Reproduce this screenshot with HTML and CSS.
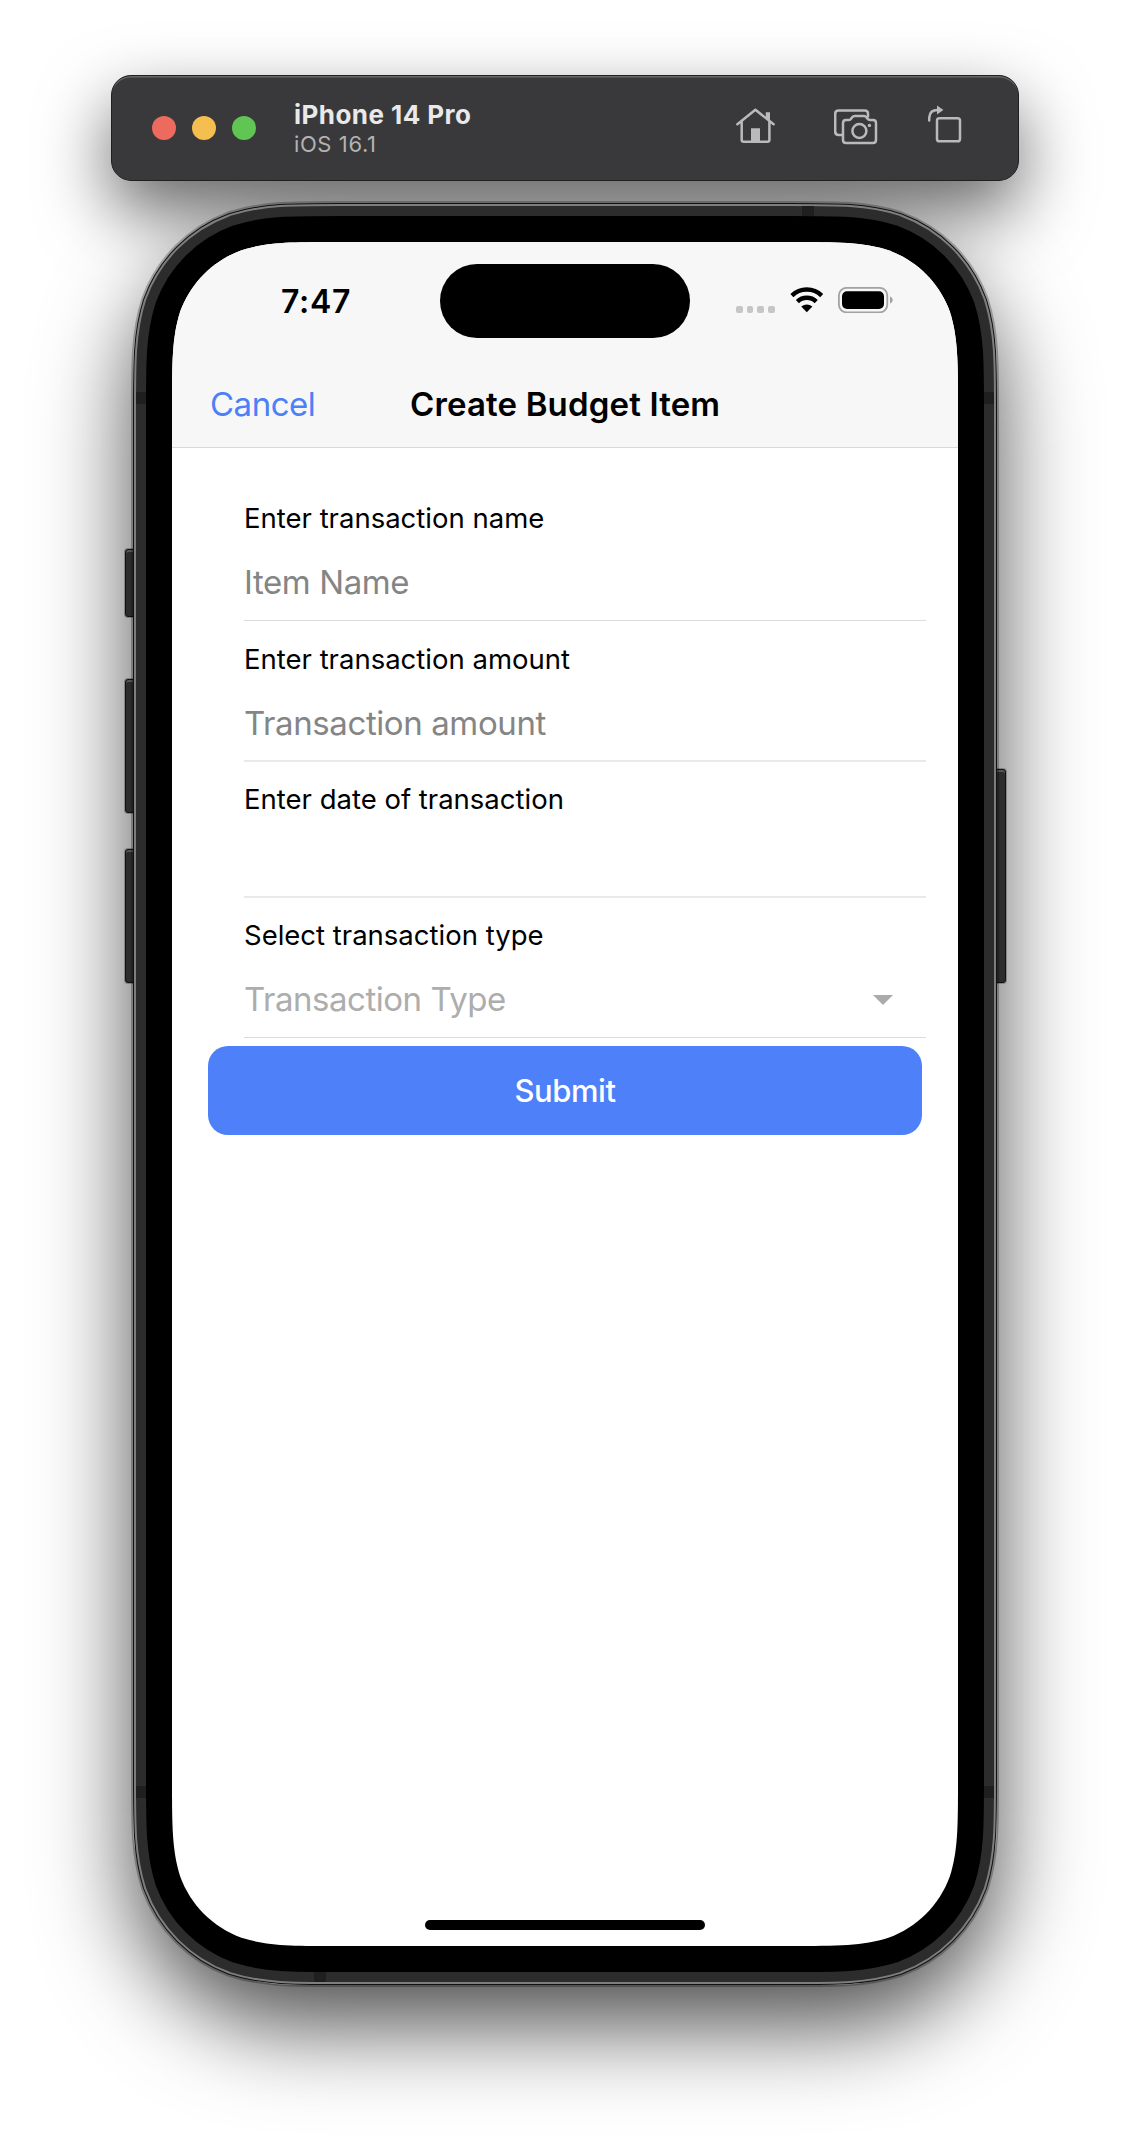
FILE: index.html
```
<!DOCTYPE html>
<html lang="en">
<head>
<meta charset="utf-8">
<title>Create Budget Item</title>
<link rel="stylesheet" href="styles.css">
</head>
<body>
<div class="dock">
<header class="toolbar">
  <div class="lights"><i class="light red"></i><i class="light yellow"></i><i class="light green"></i></div>
  <div class="device-name">
    <span class="name">iPhone 14 Pro</span>
    <span class="os">iOS 16.1</span>
  </div>
  <div class="tools">
    <svg class="tool-home" width="40" height="40" viewBox="0 -3 40 40">
      <path d="M1.4 16.2 19.4 1.8 37.6 16.2M5.7 13.5V31.8Q5.7 33.8 7.7 33.8H31.4Q33.4 33.8 33.4 31.8V13.5"/>
      <path class="solid" d="M29.8 4.2h4.2v10l-4.2-3.4zM15 20.2h9V34h-9z"/>
    </svg>
    <svg class="tool-camera" width="44" height="40" viewBox="0 -4 44 40">
      <path d="M8 26H4.6Q1.2 26 1.2 22.6V4.9Q1.2 1.5 4.6 1.5H30.8Q34 1.5 34 4.8V7.4"/>
      <path d="M12 34Q9 34 9 31V14Q9 11 12 11H15Q16.3 11 17 9.8L18 8.4Q19 7 20.8 7H30Q31.6 7 32.6 8.4L33.6 9.8Q34.4 11 36 11H39Q42 11 42 14V31Q42 34 39 34Z"/>
      <circle cx="25.4" cy="22" r="7"/>
      <circle class="solid" cx="35.4" cy="16.4" r="1.7"/>
    </svg>
    <svg class="tool-rotate" width="34" height="40" viewBox="0 -0.5 34 40">
      <rect x="9" y="12.8" width="23" height="23" rx="2.4"/>
      <path d="M1.2 15V13Q1.2 4.5 9.6 4.5"/>
      <path class="solid" d="M9 0 15.4 4.4 9 9z"/>
    </svg>
  </div>
</header>
</div>

<main class="device">
  <i class="key mute"></i><i class="key vol-up"></i><i class="key vol-down"></i><i class="key power"></i>
  <svg class="frame" width="864" height="1782" viewBox="-39 -39 864 1782">
    <defs>
      <path id="edge" d="M168.2 0H617.8C666.3 0 690.5 0 716.5 8.2C745 18.6 767.4 41 777.8 69.5C786 95.5 786 119.7 786 168.2V1535.8C786 1584.3 786 1608.5 777.8 1634.5C767.4 1663 745 1685.4 716.5 1695.8C690.5 1704 666.3 1704 617.8 1704H168.2C119.7 1704 95.5 1704 69.5 1695.8C41 1685.4 18.6 1663 8.2 1634.5C0 1608.5 0 1584.3 0 1535.8V168.2C0 119.7 0 95.5 8.2 69.5C18.6 41 41 18.6 69.5 8.2C95.5 0 119.7 0 168.2 0Z"/>
    </defs>
    <use href="#edge" class="ring halo"/>
    <use href="#edge" class="ring outline"/>
    <use href="#edge" class="ring chrome"/>
    <use href="#edge" class="ring band"/>
    <path class="antenna" d="M630-36h12v10h-12zM142 1730h12v10h-12zM-36 150h10v12h-10zM812 150h10v12h-10zM-36 1544h10v12h-10zM812 1544h10v12h-10z"/>
    <use href="#edge" class="ring bezel"/>
  </svg>
  <div class="screen">
    <div class="top">
      <div class="status">
        <span class="time">7:47</span>
        <span class="island"></span>
        <span class="indicators">
          <span class="signal"><i></i><i></i><i></i><i></i></span>
          <svg class="wifi" width="34" height="26" viewBox="0 0 34 26">
            <path class="arc" d="M1.9 8.6A21.3 21.3 0 0 1 31.7 8.6M7.4 14.6A13.4 13.4 0 0 1 26.2 14.6"/>
            <path d="M11.2 19.5Q16.8 15.6 22.4 19.5L16.8 25.2z"/>
          </svg>
          <svg class="battery" width="56" height="26" viewBox="0 0 56 26">
            <rect class="shell" x=".9" y=".9" width="48.4" height="24.4" rx="7.6"/>
            <rect x="4" y="4.2" width="42" height="17.8" rx="5"/>
            <path class="nub" d="M52 9.2Q54.8 10.6 54.8 13T52 16.8z"/>
          </svg>
        </span>
      </div>
      <nav class="nav">
        <a class="cancel">Cancel</a>
        <h1 class="title">Create Budget Item</h1>
      </nav>
    </div>
    <form class="form">
      <div class="field">
        <label class="label">Enter transaction name</label>
        <div class="value">Item Name</div>
      </div>
      <div class="field soft">
        <label class="label">Enter transaction amount</label>
        <div class="value">Transaction amount</div>
      </div>
      <div class="field soft date">
        <label class="label">Enter date of transaction</label>
      </div>
      <div class="field type">
        <label class="label">Select transaction type</label>
        <div class="value select">Transaction Type<i class="caret"></i></div>
      </div>
      <div class="submit">Submit</div>
    </form>
    <div class="home-bar"></div>
  </div>
</main>
</body>
</html>
```
FILE: styles.css
```
* { box-sizing: border-box; }

body {
  margin: 0;
  width: 1130px;
  height: 2136px;
  overflow: hidden;
  background: #fff;
  font-family: Inter, "Liberation Sans", sans-serif;
  display: flex;
  flex-direction: column;
  align-items: center;
}

/* Simulator toolbar; the dock carries its shadow, underneath the phone */
.dock {
  margin-top: 75px;
  border-radius: 20px;
  box-shadow: 0 30px 70px rgba(0, 0, 0, .6);
}
.toolbar {
  position: relative;
  z-index: 2;
  width: 908px;
  height: 106px;
  padding: 0 56px 0 40px;
  display: flex;
  align-items: center;
  background: #39393b;
  border: 1px solid #1e1f1f;
  border-radius: 20px;
  box-shadow: inset 0 2px 0 -0.5px #666868;
}
.lights { display: flex; gap: 16px; }
.light { width: 24px; height: 24px; border-radius: 50%; }
.red { background: #ec6a5e; }
.yellow { background: #f4bf4f; }
.green { background: #61c554; }
.device-name { display: flex; flex-direction: column; margin-left: 38px; padding-top: 1px; }
.name { font-size: 26px; line-height: 32px; font-weight: 700; letter-spacing: .45px; color: #e9e9ea; }
.os { margin-top: -1px; font-size: 22px; line-height: 28px; letter-spacing: .6px; color: #b2b2b4; }
.tools { display: flex; margin-left: auto; margin-bottom: 6px; }
.tools svg {
  fill: none;
  stroke: #bababc;
  stroke-width: 2.5;
  stroke-linecap: round;
  stroke-linejoin: round;
}
.tools .solid { fill: #bababc; stroke: none; }
.tool-camera { margin-left: 58px; }
.tool-rotate { margin-left: 50px; }

/* Phone body */
.device {
  position: relative;
  z-index: 1;
  width: 864px;
  height: 1782px;
  margin-top: 22px;
  padding: 39px;
  border-radius: 160px;
  box-shadow: 0 40px 92px rgba(0, 0, 0, .7);
}
.frame { position: absolute; inset: 0; overflow: visible; }
.ring { fill: #000; }
.halo { stroke: rgba(0, 0, 0, .25); stroke-width: 82; }
.outline { stroke: #111; stroke-width: 78; }
.chrome { stroke: #7e7e7e; stroke-width: 76; }
.band { stroke: #2c2c2c; stroke-width: 72; }
.bezel { stroke: #000; stroke-width: 52; }
.antenna { fill: #1f1f1f; }
.key {
  position: absolute;
  left: -8px;
  width: 12px;
  background: #2c2c2c;
  border: 1px solid #111;
  border-radius: 3px;
  box-shadow: inset 0 2px 0 #555, 0 0 0 1px rgba(0, 0, 0, .25);
}
.mute { top: 346px; height: 68px; }
.vol-up { top: 476px; height: 134px; }
.vol-down { top: 646px; height: 134px; }
.power { left: auto; right: -9px; top: 566px; height: 214px; }

.screen {
  position: relative;
  width: 786px;
  height: 1704px;
  display: flex;
  flex-direction: column;
  background: #fff;
  clip-path: path("M168.2 0H617.8C666.3 0 690.5 0 716.5 8.2C745 18.6 767.4 41 777.8 69.5C786 95.5 786 119.7 786 168.2V1535.8C786 1584.3 786 1608.5 777.8 1634.5C767.4 1663 745 1685.4 716.5 1695.8C690.5 1704 666.3 1704 617.8 1704H168.2C119.7 1704 95.5 1704 69.5 1695.8C41 1685.4 18.6 1663 8.2 1634.5C0 1608.5 0 1584.3 0 1535.8V168.2C0 119.7 0 95.5 8.2 69.5C18.6 41 41 18.6 69.5 8.2C95.5 0 119.7 0 168.2 0Z");
}
.top { height: 206px; background: #f7f7f7; border-bottom: 1px solid #d9d9d9; }
.status {
  height: 118px;
  display: grid;
  grid-template-columns: 268px 250px 268px;
  align-items: center;
}
.time { padding-left: 109px; font-size: 32px; font-weight: 600; letter-spacing: .7px; color: #000; }
.island { height: 74px; border-radius: 37px; background: #000; }
.indicators { display: flex; padding: 0 0 2px 46px; }
.signal { display: flex; gap: 4px; padding-top: 19px; height: 26px; }
.signal i { width: 6.7px; height: 7px; border-radius: 2px; background: #c6c6c6; }
.wifi { margin-left: 15px; }
.arc { fill: none; stroke: #000; stroke-width: 4.4; }
.battery { margin-left: 14px; }
.shell { fill: none; stroke: #a2a2a2; stroke-width: 1.8; }
.nub { fill: #a2a2a2; }

.nav {
  height: 87px;
  display: grid;
  grid-template-columns: 238px 310px 1fr;
  align-items: center;
}
.cancel { padding-left: 38px; font-size: 33px; letter-spacing: -.5px; color: #4c80f8; }
.title {
  margin: 0;
  font-size: 33px;
  font-weight: 600;
  letter-spacing: .15px;
  color: #000;
  text-align: center;
  white-space: nowrap;
}

/* Form */
.form { padding: 32px 32px 0 72px; }
.field { height: 141px; padding-top: 18px; border-bottom: 1px solid #dcdcdc; }
.soft { border-bottom: 2px solid #e9e9e9; }
.date { height: 136px; padding-top: 17px; }
.type { height: 140px; padding-top: 17px; }
.label { display: block; font-size: 27.5px; line-height: 40px; color: #000; }
.value { margin-top: 14px; font-size: 33px; line-height: 60px; letter-spacing: -.4px; color: #858585; }
.select {
  display: flex;
  justify-content: space-between;
  align-items: center;
  padding-right: 33px;
  letter-spacing: -.47px;
  color: #adadad;
}
.caret { margin-top: 2px; border: 10px solid transparent; border-top-color: #aaa; border-bottom: 0; }
.submit {
  margin: 8px 4px 0 -36px;
  height: 89px;
  border-radius: 20px;
  background: #4d80f9;
  color: #fff;
  font-size: 31px;
  font-weight: 500;
  letter-spacing: -.45px;
  line-height: 90px;
  text-align: center;
}
.home-bar { width: 280px; height: 10px; margin: auto auto 16px; border-radius: 5px; background: #000; }
```
